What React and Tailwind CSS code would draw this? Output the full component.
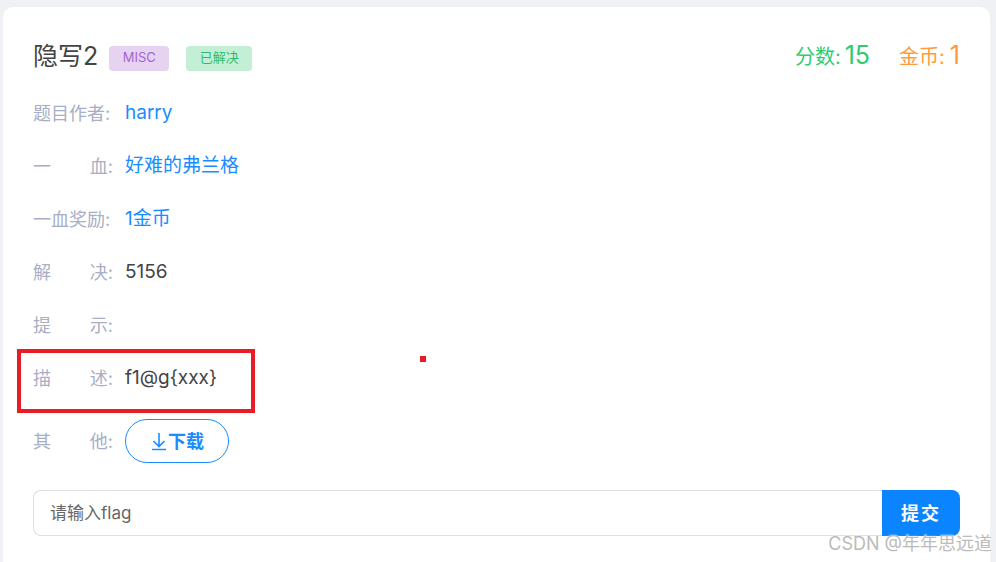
import React, { useState } from "react";

const rows = [
  { label: ["题目作者:"], value: "harry", blue: true },
  { label: ["一", "血:"], value: "好难的弗兰格", blue: true },
  { label: ["一血奖励:"], value: "1金币", blue: true },
  { label: ["解", "决:"], value: "5156" },
  { label: ["提", "示:"], value: "" },
];

const Label = ({ parts }) => (
  <div className="flex w-[80px] shrink-0 justify-between text-[18px] text-[#a8aec6]">
    {parts.map((p) => (
      <span key={p}>{p}</span>
    ))}
  </div>
);

const App = () => {
  const [flag, setFlag] = useState("");

  return (
    <div
      className="relative h-[562px] w-[996px] overflow-hidden bg-[#f0f1f4] pl-[3px] pr-[6px] pt-[7px]"
      style={{ fontFamily: "Inter, 'Noto Sans CJK SC', sans-serif" }}
    >
      <div className="h-[600px] rounded-[10px] bg-white px-[30px] pt-[30px]">
        {/* ================= HEADER ================= */}
        <div className="flex h-[38px] items-center justify-between">
          <div className="flex items-center">
            <h1 className="text-[25px] leading-none text-[#444]">隐写2</h1>
            <span className="ml-[11px] mt-[4px] flex h-[25px] w-[60px] items-center justify-center rounded-[4px] bg-[#e6d3f1] text-[13px] text-[#a464d4]">
              MISC
            </span>
            <span className="ml-[17px] mt-[4px] flex h-[25px] w-[66px] items-center justify-center rounded-[4px] bg-[#c2efd6] text-[13px] text-[#2fbb6b]">
              已解决
            </span>
          </div>
          <div className="flex items-baseline">
            <span className="text-[20px] text-[#2ecc71]">分数:</span>
            <span className="ml-[4px] text-[25px] text-[#2ecc71]">15</span>
            <span className="ml-[29px] text-[20px] text-[#ff9a3c]">金币:</span>
            <span className="ml-[5px] text-[25px] text-[#ff9a3c]">1</span>
          </div>
        </div>

        {/* ================= INFO ROWS ================= */}
        <div className="mt-[12px] flex flex-col">
          {rows.map((r) => (
            <div key={r.label.join("")} className="flex h-[53px] items-center gap-[12px]">
              <Label parts={r.label} />
              <span
                className={`text-[19px] ${r.blue ? "text-[#1a8cff]" : "text-[#444]"}`}
              >
                {r.value}
              </span>
            </div>
          ))}

          {/* DESCRIPTION (highlighted) */}
          <div className="relative flex h-[53px] items-center gap-[12px]">
            <Label parts={["描", "述:"]} />
            <span className="text-[19px] text-[#444]">f1@g{"{xxx}"}</span>
            <div className="absolute left-[-16px] top-[-3px] h-[64px] w-[238px] border-[4px] border-[#e81c24]" />
            <div className="absolute left-[387px] top-[4px] h-[6px] w-[6px] bg-[#e81c24]" />
          </div>

          {/* OTHER */}
          <div className="flex h-[72px] items-center gap-[12px]">
            <Label parts={["其", "他:"]} />
            <button className="flex h-[44px] w-[104px] items-center justify-center rounded-full border border-[#1a8cff] text-[18px] font-bold text-[#1a8cff]">
              <svg width="18" height="20" viewBox="0 0 18 20" fill="none" stroke="#1a8cff" strokeWidth="1.6">
                <path d="M9 2v13M3.5 10l5.5 5.5L14.5 10M2 18.5h14" />
              </svg>
              <span>下载</span>
            </button>
          </div>
        </div>

        {/* ================= FLAG INPUT ================= */}
        <div className="mt-[13px] flex h-[46px]">
          <input
            value={flag}
            onChange={(e) => setFlag(e.target.value)}
            placeholder="请输入flag"
            className="h-full flex-1 rounded-l-[8px] border border-r-0 border-[#dcdfe6] px-[16px] text-[17px] text-[#444] outline-none placeholder:text-[#666]"
          />
          <button className="h-full w-[78px] rounded-r-[8px] bg-[#0a84ff] text-[18px] font-bold tracking-[2px] text-white">
            提交
          </button>
        </div>
      </div>

      <div className="absolute bottom-[5px] right-[4px] text-[18px] text-[#bbbbbb] [text-shadow:0_0_2px_#fff]">
        CSDN @年年思远道
      </div>
    </div>
  );
};

export default App;
